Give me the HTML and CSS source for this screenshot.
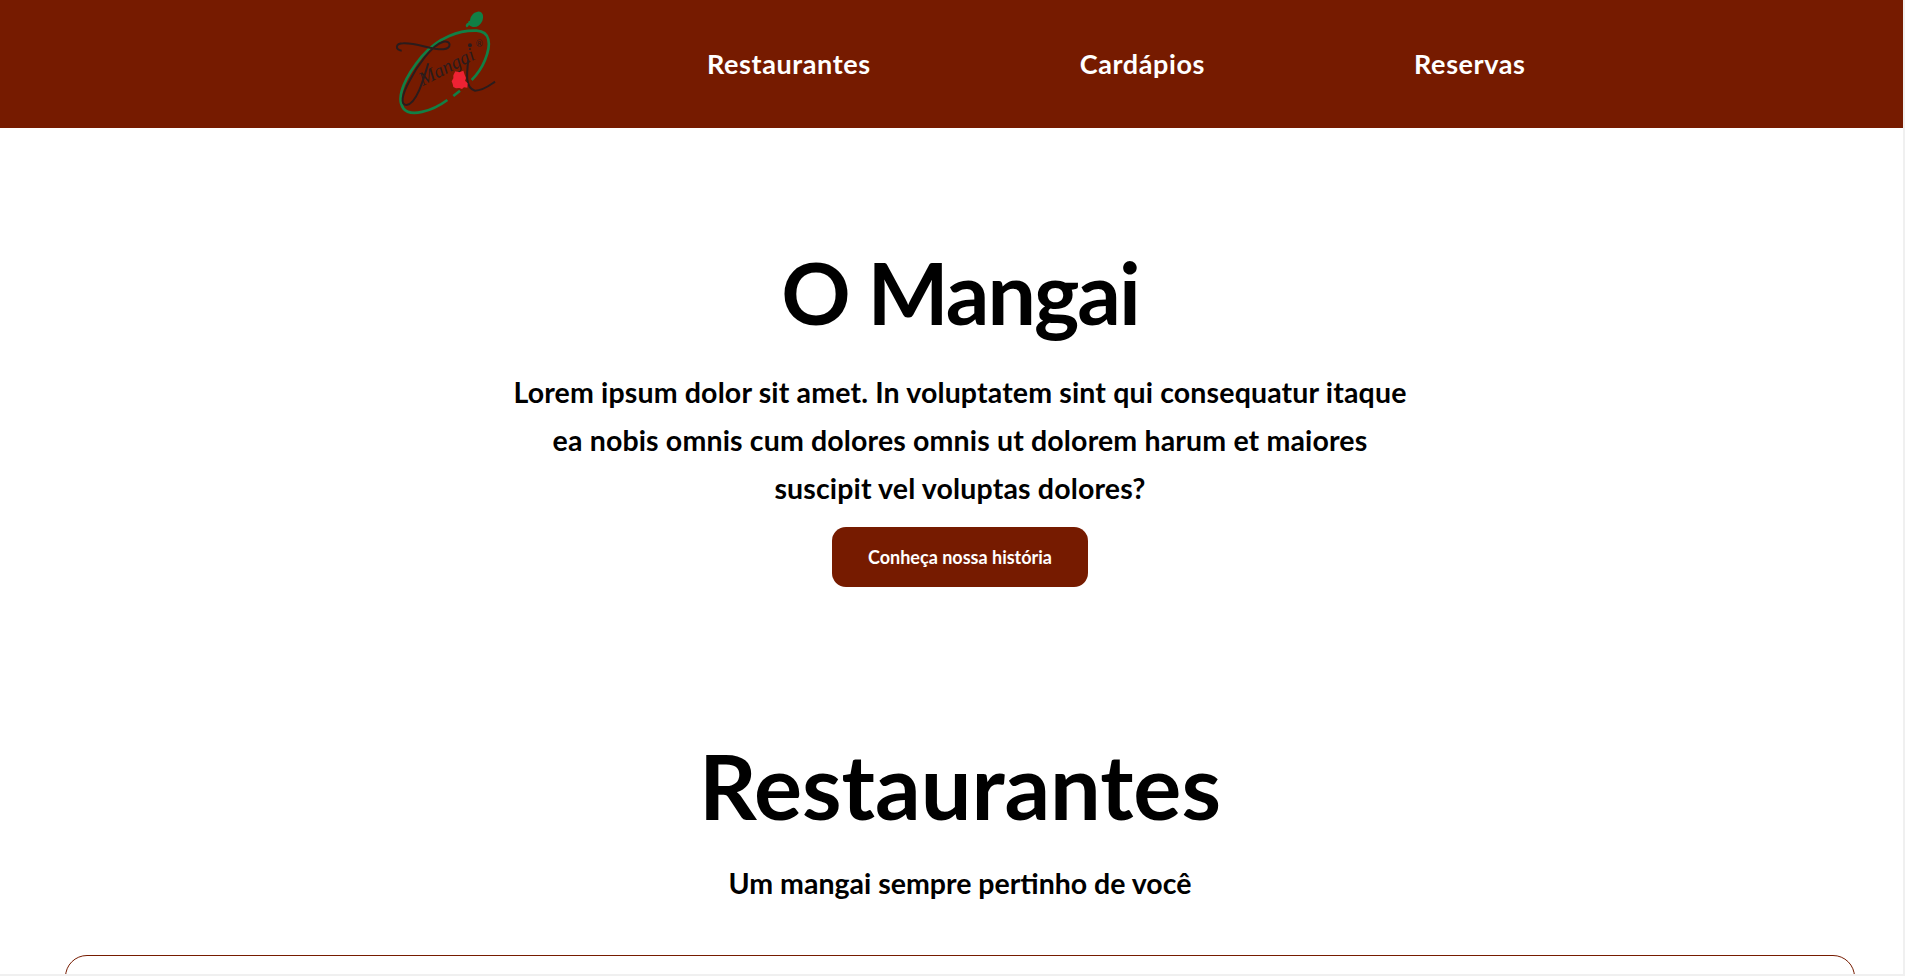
FILE: index.html
```html
<!DOCTYPE html>
<html lang="pt-BR">
<head>
  <meta charset="UTF-8">
  <link rel="stylesheet" href="styles.css">
</head>
<body>
  <header class="topbar">
    <a class="logo" href="#">
      <svg width="200" height="128" viewBox="0 0 600 384">
        <path d="M330 62c-5 0-6 3-5 6-6 1-10 8-6 13 3 2 6-2 8-6 14 12 32 6 40-12 6-16 0-30-14-28-14 2-22 14-23 27z" fill="#118045"/>
        <path class="logo-ring" d="M262 300C215 335 150 352 130 325 105 290 140 225 185 170 235 110 300 90 350 92 390 95 395 130 375 180 365 205 350 225 335 240M300 272L280 288"/>
        <path class="logo-line" d="M125 152C105 150 105 130 130 130 170 128 215 150 250 148 275 145 275 120 250 125 215 135 170 200 150 240 125 285 120 315 140 315 170 310 190 240 205 190M325 180C320 220 315 265 345 272 370 272 390 255 405 245"/>
        <text class="logo-script" x="188" y="258" transform="rotate(-27 188 258)">Mangai</text>
        <text class="logo-mark" x="347" y="140">®</text>
        <circle cx="330" cy="136" r="6" fill="#2a1c1c"/>
        <path d="M286 214l12 3 12-5 4 12 4 10-3 8 8 8-1 13-10-1-6 5-8-3-10 1-8-4-2-9-3-8 5-9 0-9z" fill="#ee2233"/>
      </svg>
    </a>
    <nav class="menu">
      <a href="#">Restaurantes</a>
      <a href="#">Cardápios</a>
      <a href="#">Reservas</a>
    </nav>
  </header>

  <section class="about">
    <h1>O Mangai</h1>
    <p>Lorem ipsum dolor sit amet. In voluptatem sint qui consequatur itaque ea nobis omnis cum dolores omnis ut dolorem harum et maiores suscipit vel voluptas dolores?</p>
    <a class="btn" href="#">Conheça nossa história</a>
  </section>

  <section class="places">
    <h2>Restaurantes</h2>
    <p>Um mangai sempre pertinho de você</p>
    <div class="place-card"></div>
  </section>

  <div class="scroll-y"></div>
  <div class="scroll-x"></div>
</body>
</html>
```

FILE: styles.css
```css
html {
  overflow: hidden;
  background: #fff;
}

body {
  margin: 0;
  width: 1920px;
  height: 976px;
  overflow: hidden;
  font-family: Lato, sans-serif;
  font-weight: 700;
  color: #000;
}

a {
  color: inherit;
  text-decoration: none;
}

.topbar {
  height: 128px;
  background: #761b00;
  display: flex;
  align-items: center;
  padding-left: 360px;
}

.logo {
  display: flex;
}

.logo-ring {
  fill: none;
  stroke: #118045;
  stroke-width: 8;
}

.logo-line {
  fill: none;
  stroke: #2a1c1c;
  stroke-width: 6;
}

.logo-script {
  font-family: "Liberation Serif", serif;
  font-style: italic;
  font-weight: 400;
  font-size: 58px;
  fill: #2a1c1c;
}

.logo-mark {
  font-weight: 400;
  font-size: 26px;
  fill: #2a1c1c;
}

.menu {
  display: flex;
  align-items: center;
  color: #fff;
  font-size: 27px;
  letter-spacing: 0.6px;
  margin-left: 147px;
  gap: 209px;
  padding-bottom: 2px;
}

.about {
  text-align: center;
  padding-top: 119px;
}

.about h1 {
  margin: 0;
  font-size: 86px;
  letter-spacing: -2px;
  line-height: 90px;
}

.about p {
  width: 910px;
  margin: 31px auto 0;
  font-size: 28.5px;
  letter-spacing: 0.15px;
  line-height: 48px;
}

.btn {
  display: inline-block;
  width: 256px;
  height: 60px;
  line-height: 60px;
  margin-top: 15px;
  background: #761b00;
  color: #fff;
  border-radius: 14px;
  font-size: 18px;
}

.places {
  text-align: center;
  padding-top: 153px;
}

.places h2 {
  margin: 0;
  font-size: 90px;
  line-height: 90px;
}

.places p {
  margin: 33px 0 0;
  font-size: 28.5px;
  line-height: 40px;
}

.place-card {
  height: 40px;
  margin: 52px 65px 0;
  border: 1px solid #761b00;
  border-radius: 22px 22px 0 0;
}

/* the thin scrollbars of the window */
.scroll-y,
.scroll-x {
  position: fixed;
  background: #f0f0f0;
}

.scroll-y {
  top: 0;
  right: 0;
  bottom: 0;
  width: 2px;
}

.scroll-x {
  left: 0;
  right: 0;
  bottom: 0;
  height: 2px;
}
```
